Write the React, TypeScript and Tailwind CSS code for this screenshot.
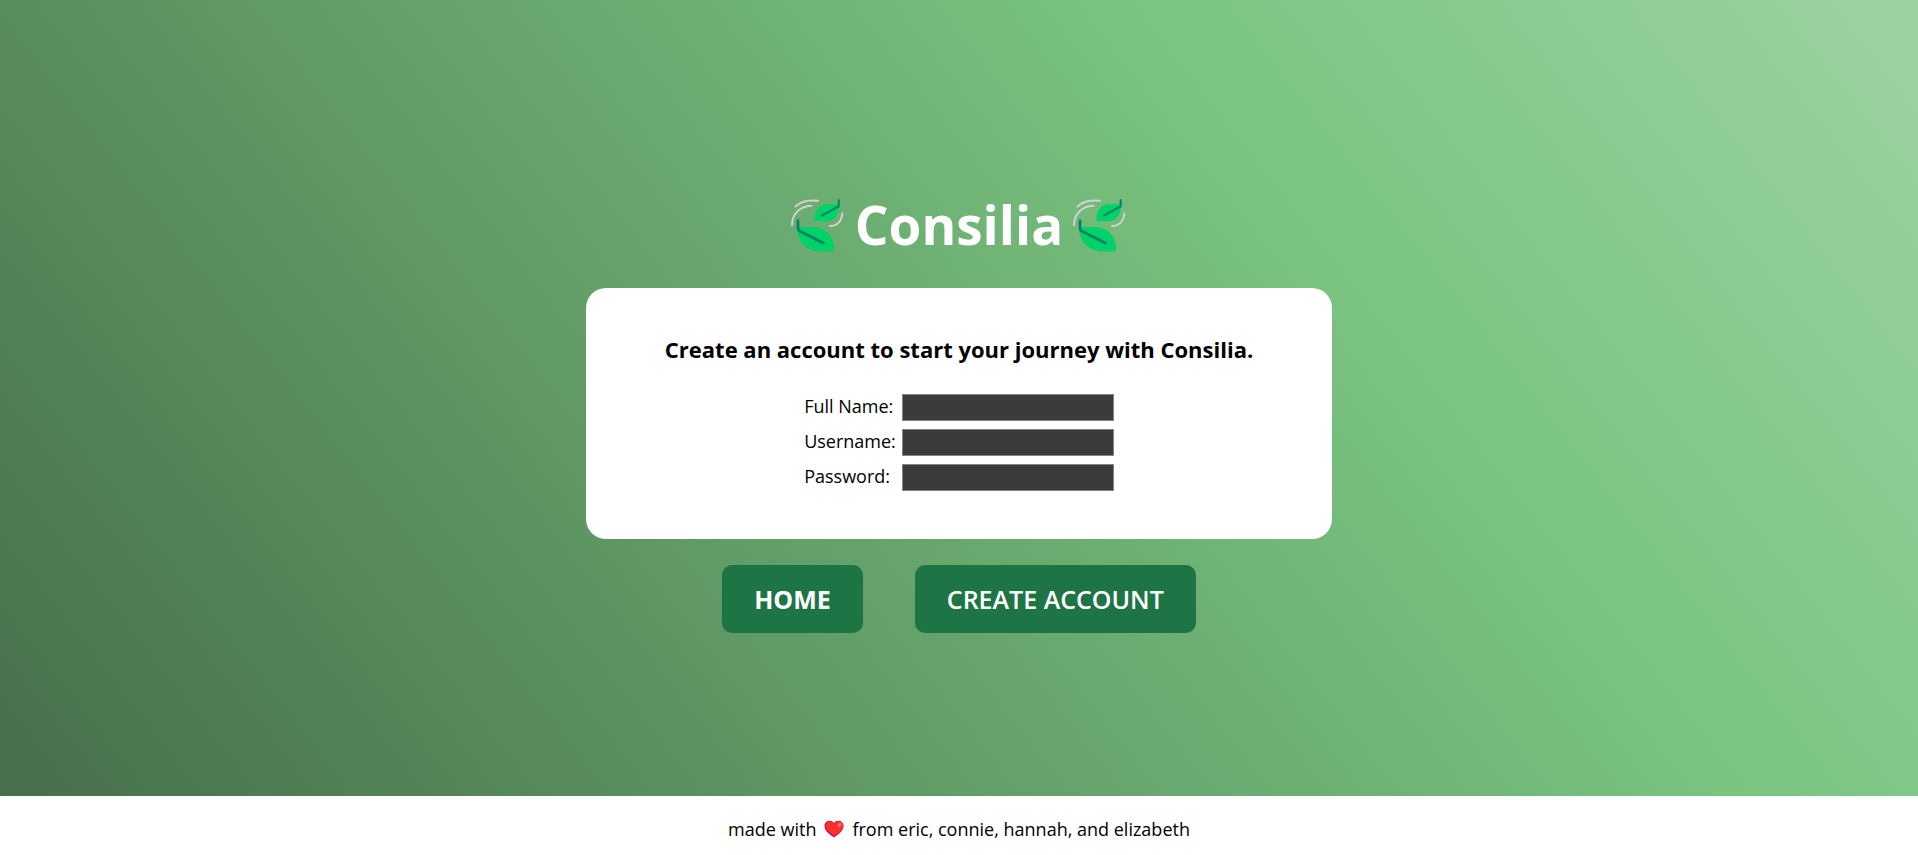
import React from "react"

const fields = [
  { id: "fullName", label: "Full Name:", type: "text" },
  { id: "username", label: "Username:", type: "text" },
  { id: "password", label: "Password:", type: "password" },
]

const buttonStyle = "rounded-[10px] bg-[#1d7545] px-8 py-4 text-[25px] leading-9 text-white cursor-pointer"

function Leaves() {
  return <svg viewBox="0 0 66 66" className="h-[66px] w-[66px]" fill="none" strokeLinecap="round" aria-hidden="true">
    <g stroke="#D3D3D3" strokeWidth="1.9">
      <path d="M10.5 14.5 Q18 7 33 8.8" />
      <path d="M7 33 C7 22 15 14 26.5 13.7" />
      <path d="M45 34 C52 34 57 29 57.3 21.5" />
    </g>
    <path d="M29.3 27.8 C29 18.5 34.5 12.2 42 12.2 H54.2 C54 22.5 49.5 29.3 40 29.3 H31 Q29.4 29.3 29.3 27.8 Z" fill="#00D26A" />
    <path d="M12 35 H28 C40 35 49 44.5 49 56.5 V57.8 Q49 59.5 47.3 59.5 H36 C22 59.5 12 50 12 35 Z" fill="#00D26A" />
    <path d="M36.7 23.7 L53.7 14.5 V8" stroke="#008463" strokeWidth="2" />
    <path d="M13 28.5 V36.5 C13 38 14 38.8 15 39.3 L38.3 51" stroke="#008463" strokeWidth="2.7" />
  </svg>
}

function Heart() {
  return <svg viewBox="0 0 20 18" className="h-[18px] w-5" aria-label="love" role="img">
    <path d="M10 17.5 C7 15 0.5 11.5 0.5 6 C0.5 1 7 -1 10 3 C13 -1 19.5 1 19.5 6 C19.5 11.5 13 15 10 17.5 Z" fill="#CA0B4A" />
    <path d="M10.5 16 C8 14 1.8 11 1.8 5.5 C2 1 7.5 0 10.3 4 C13 -0.5 19.2 1 19.2 6 C19.2 11 13 14 10.5 16 Z" fill="#F8312F" />
    <ellipse cx="15.5" cy="4.8" rx="1.6" ry="2.4" transform="rotate(30 15.5 4.8)" fill="#F37366" />
  </svg>
}

export default function App() {
  return <div className="flex min-h-screen flex-col font-['Open_Sans','Noto_Sans',sans-serif] text-black">
    <main className="
      flex flex-1 flex-col items-center justify-center pt-6
      bg-[linear-gradient(52deg,#466f4c_0%,#7ac480_69%,#9cd2a3_100%)]
    ">
      <h1 className="mb-[26px] flex items-center gap-1 text-[53px] leading-[74px] font-bold text-white">
        <Leaves /> Consilia <Leaves />
      </h1>

      <section className="flex w-full max-w-[746px] flex-col items-center rounded-[20px] bg-white px-10 pt-11 pb-[46px]">
        <h2 className="text-[22px] leading-[34px] font-bold">
          Create an account to start your journey with Consilia.
        </h2>
        <form id="signup" className="mt-[26px] grid grid-cols-[auto_auto] items-center gap-x-1.5 gap-y-1">
          {fields.map(({ id, label, type }) => (
            <React.Fragment key={id}>
              <label htmlFor={id} className="pb-0.5 text-[18px] leading-[29px]">{label}</label>
              <input id={id} type={type} className="h-[27px] w-[212px] border border-[#858585] bg-[#3b3b3b] px-1 text-white" />
            </React.Fragment>
          ))}
        </form>
      </section>

      <div className="mt-[26px] flex gap-[52px]">
        <button type="button" className={`${buttonStyle} font-bold`}>HOME</button>
        <button type="submit" form="signup" className={`${buttonStyle} font-semibold`}>CREATE ACCOUNT</button>
      </div>
    </main>

    <footer className="flex h-[59px] items-center justify-center gap-2 pt-1.5 text-[18px] leading-7">
      made with <Heart /> from eric, connie, hannah, and elizabeth
    </footer>
  </div>
}
